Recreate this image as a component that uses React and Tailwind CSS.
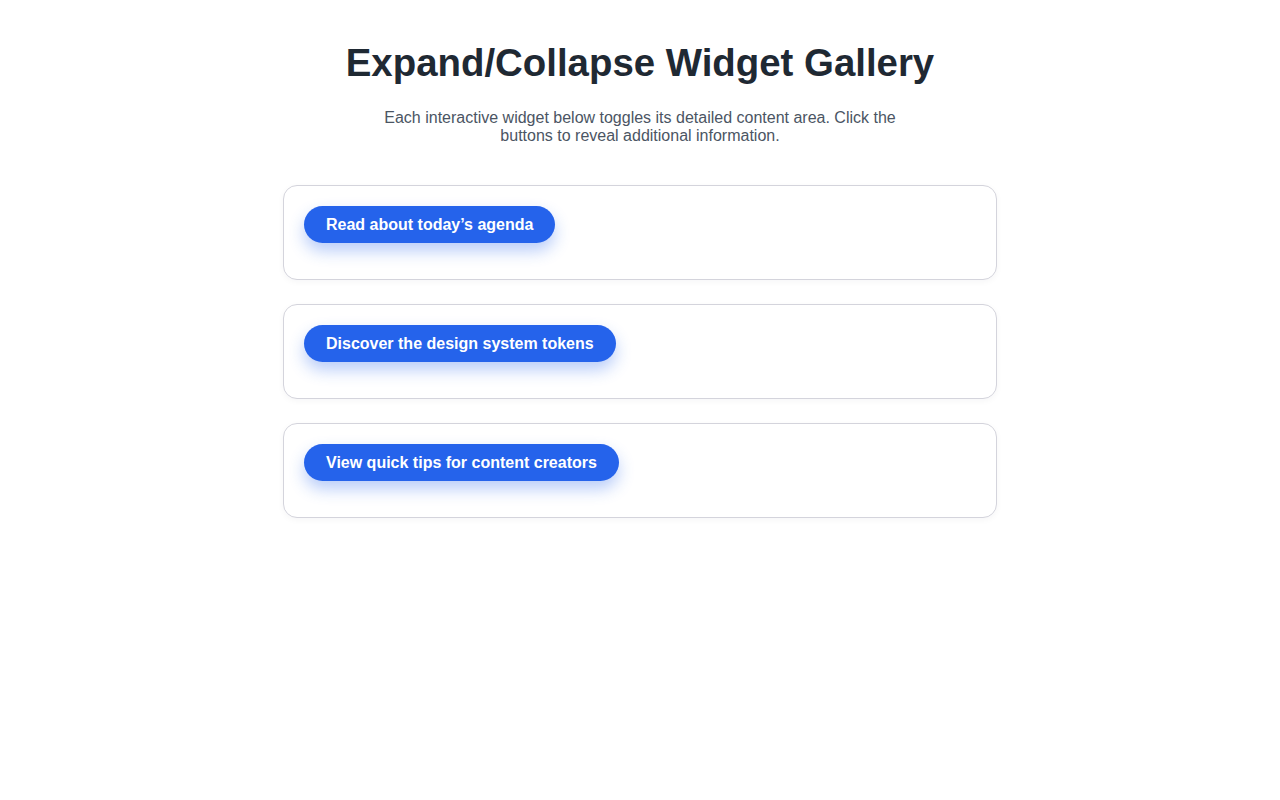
import { useState } from "react";

const widgets = [
  {
    label: "Read about today’s agenda",
    body: "Morning standup at 9:30, design review at 11:00 and a team retro after lunch.",
  },
  {
    label: "Discover the design system tokens",
    body: "Colours, spacing, radii and type scales are shared across every product surface.",
  },
  {
    label: "View quick tips for content creators",
    body: "Keep headlines short, lead with the benefit and write alt text for every image.",
  },
];

function Widget({ label, body }) {
  const [open, setOpen] = useState(false);
  return (
    <div className="rounded-[14px] border border-[#d4d4dc] bg-white px-5 pt-5 pb-9 shadow-[0_2px_6px_rgba(15,23,42,0.04)]">
      <button
        onClick={() => setOpen(!open)}
        className="h-[37px] rounded-full bg-[#2563eb] px-[22px] text-[16px] font-bold text-white shadow-[0_8px_16px_rgba(37,99,235,0.32)]"
      >
        {label}
      </button>
      {open && <p className="mt-4 text-[15px] text-[#4b5563]">{body}</p>}
    </div>
  );
}

export default function App() {
  return (
    <main className="min-h-screen bg-white pt-[39px] font-['Liberation_Sans',Arial,sans-serif]">
      <h1 className="text-center text-[38.4px] leading-[48px] font-bold text-[#1f2933]">
        Expand/Collapse Widget Gallery
      </h1>
      <p className="mx-auto mt-[22px] w-[530px] text-center text-[16px] leading-[18px] text-[#4b5563]">
        Each interactive widget below toggles its detailed content area. Click the buttons to reveal additional information.
      </p>
      <div className="mx-auto mt-[40px] flex w-[714px] flex-col gap-[24px]">
        {widgets.map((w) => (
          <Widget key={w.label} {...w} />
        ))}
      </div>
    </main>
  );
}
